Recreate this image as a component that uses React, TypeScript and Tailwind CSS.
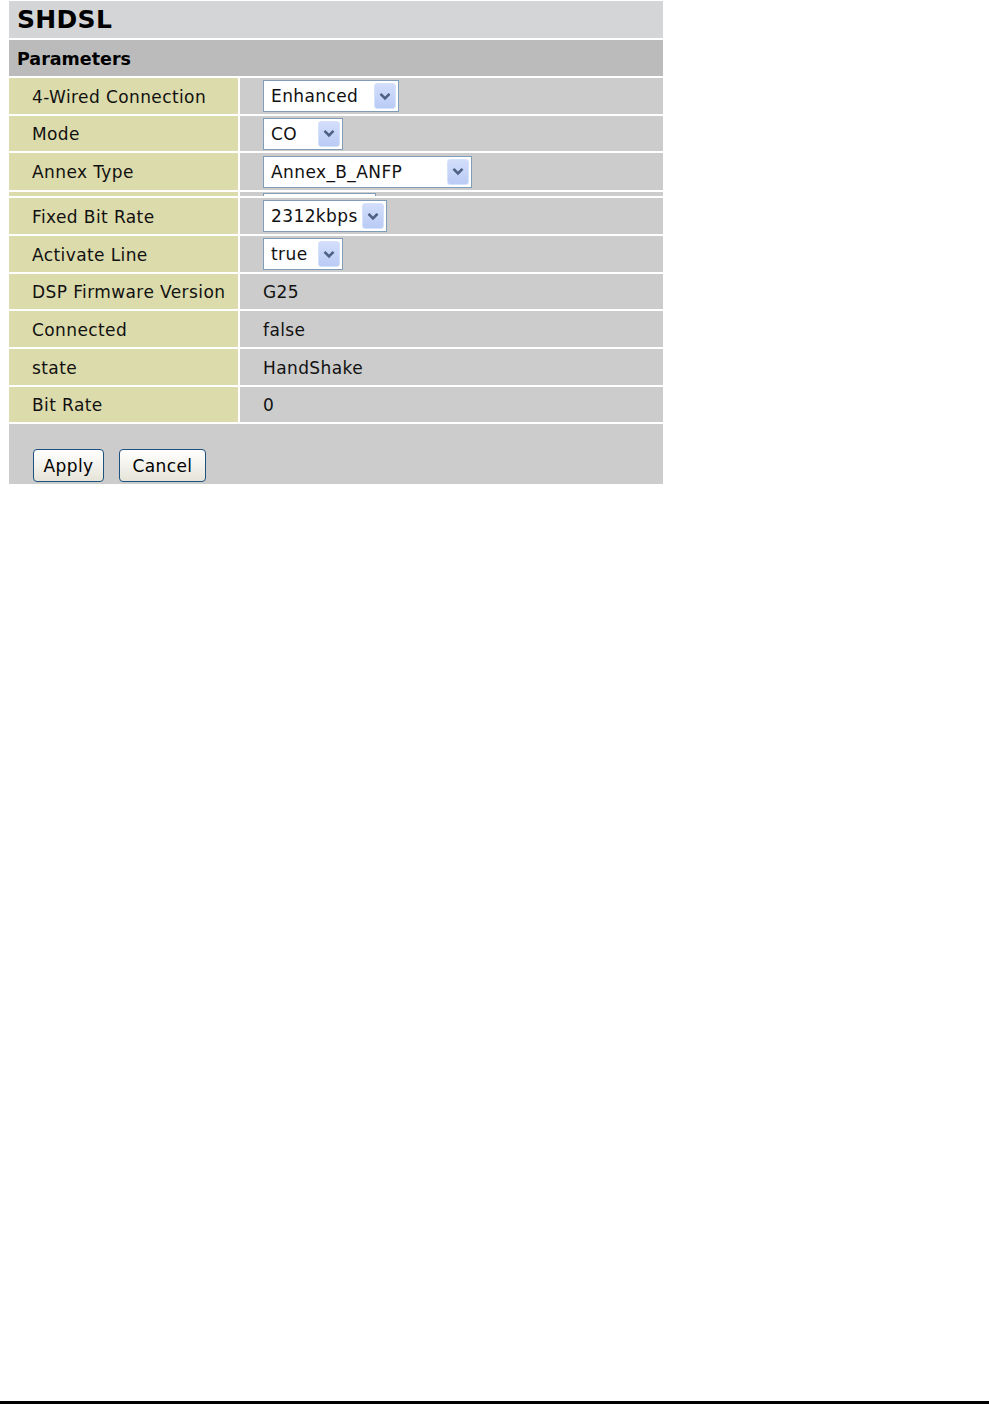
import React from "react";

type Row = {
  label: string;
  h: string;
  select?: { value: string; w: string };
  text?: string;
};

const rows: Row[] = [
  { label: "4-Wired Connection", h: "h-[36px]", select: { value: "Enhanced", w: "w-[136px]" } },
  { label: "Mode", h: "h-[35px]", select: { value: "CO", w: "w-[80px]" } },
  { label: "Annex Type", h: "h-[37px]", select: { value: "Annex_B_ANFP", w: "w-[209px]" } },
];

const rows2: Row[] = [
  { label: "Fixed Bit Rate", h: "h-[36px]", select: { value: "2312kbps", w: "w-[124px]" } },
  { label: "Activate Line", h: "h-[36px]", select: { value: "true", w: "w-[80px]" } },
  { label: "DSP Firmware Version", h: "h-[35px]", text: "G25" },
  { label: "Connected", h: "h-[36px]", text: "false" },
  { label: "state", h: "h-[36px]", text: "HandShake" },
  { label: "Bit Rate", h: "h-[35px]", text: "0" },
];

function Arrow() {
  return (
    <div className="flex h-[26px] w-[22px] items-center justify-center rounded-[3px] border border-[#d6e2fb] bg-gradient-to-b from-[#d3defb] to-[#b9cbf5]">
      <svg width="12" height="9" viewBox="0 0 12 9">
        <path d="M1.5 1.8 L6 6.3 L10.5 1.8" fill="none" stroke="#4d6185" strokeWidth="2.6" />
      </svg>
    </div>
  );
}

function Select({ value, w }: { value: string; w: string }) {
  return (
    <div className={`flex h-[32px] ${w} items-center justify-between border border-[#7f9db9] bg-white pl-[7px] pr-[2px]`}>
      <span className="pt-[2px]">{value}</span>
      <Arrow />
    </div>
  );
}

function TableRow({ row }: { row: Row }) {
  return (
    <div className={`flex ${row.h} gap-[2px]`}>
      <div className="flex w-[229px] items-center bg-[#dcdbab] pl-[23px] pt-[3px]">{row.label}</div>
      <div className="flex flex-1 items-center bg-[#cccccc] pl-[23px]">
        {row.select ? <Select {...row.select} /> : <span className="pt-[3px]">{row.text}</span>}
      </div>
    </div>
  );
}

export default function App() {
  return (
    <div
      className="flex h-[1404px] flex-col bg-white text-[17px] tracking-[0.4px] text-[#111]"
      style={{ fontFamily: '"DejaVu Sans", Verdana, sans-serif' }}
    >
      <div className="ml-[9px] mt-[1px] flex w-[654px] flex-col gap-[2px]">
        <div className="flex h-[37px] items-center bg-[#d4d5d7] pl-[8px] pt-[1px] text-[25px] font-bold tracking-[0.3px] text-black">SHDSL</div>
        <div className="flex h-[36px] items-center bg-[#bbbbbb] pl-[8px] pt-[2px] text-[17.5px] font-bold tracking-normal text-black">Parameters</div>
        {rows.map((r) => (
          <TableRow key={r.label} row={r} />
        ))}
        {/* collapsed row, only the top edge of its select shows */}
        <div className="flex h-[4px] gap-[2px] overflow-hidden">
          <div className="w-[229px] bg-[#dcdbab]" />
          <div className="flex-1 bg-[#cccccc] pl-[23px] pt-[1px]">
            <div className="h-[10px] w-[113px] border border-[#7f9db9] bg-white" />
          </div>
        </div>
        {rows2.map((r) => (
          <TableRow key={r.label} row={r} />
        ))}
        <div className="flex h-[60px] items-end gap-[15px] bg-[#cccccc] pb-[2px] pl-[24px]">
          <button className="h-[33px] w-[71px] rounded-[4px] border border-[#1c5180] bg-gradient-to-b from-white to-[#e6e4d8] pt-[2px] text-[17px] text-black">
            Apply
          </button>
          <button className="h-[33px] w-[87px] rounded-[4px] border border-[#1c5180] bg-gradient-to-b from-white to-[#e6e4d8] pt-[2px] text-[17px] text-black">
            Cancel
          </button>
        </div>
      </div>
      <div className="flex-1" />
      <div className="h-[3px] bg-black" />
    </div>
  );
}
